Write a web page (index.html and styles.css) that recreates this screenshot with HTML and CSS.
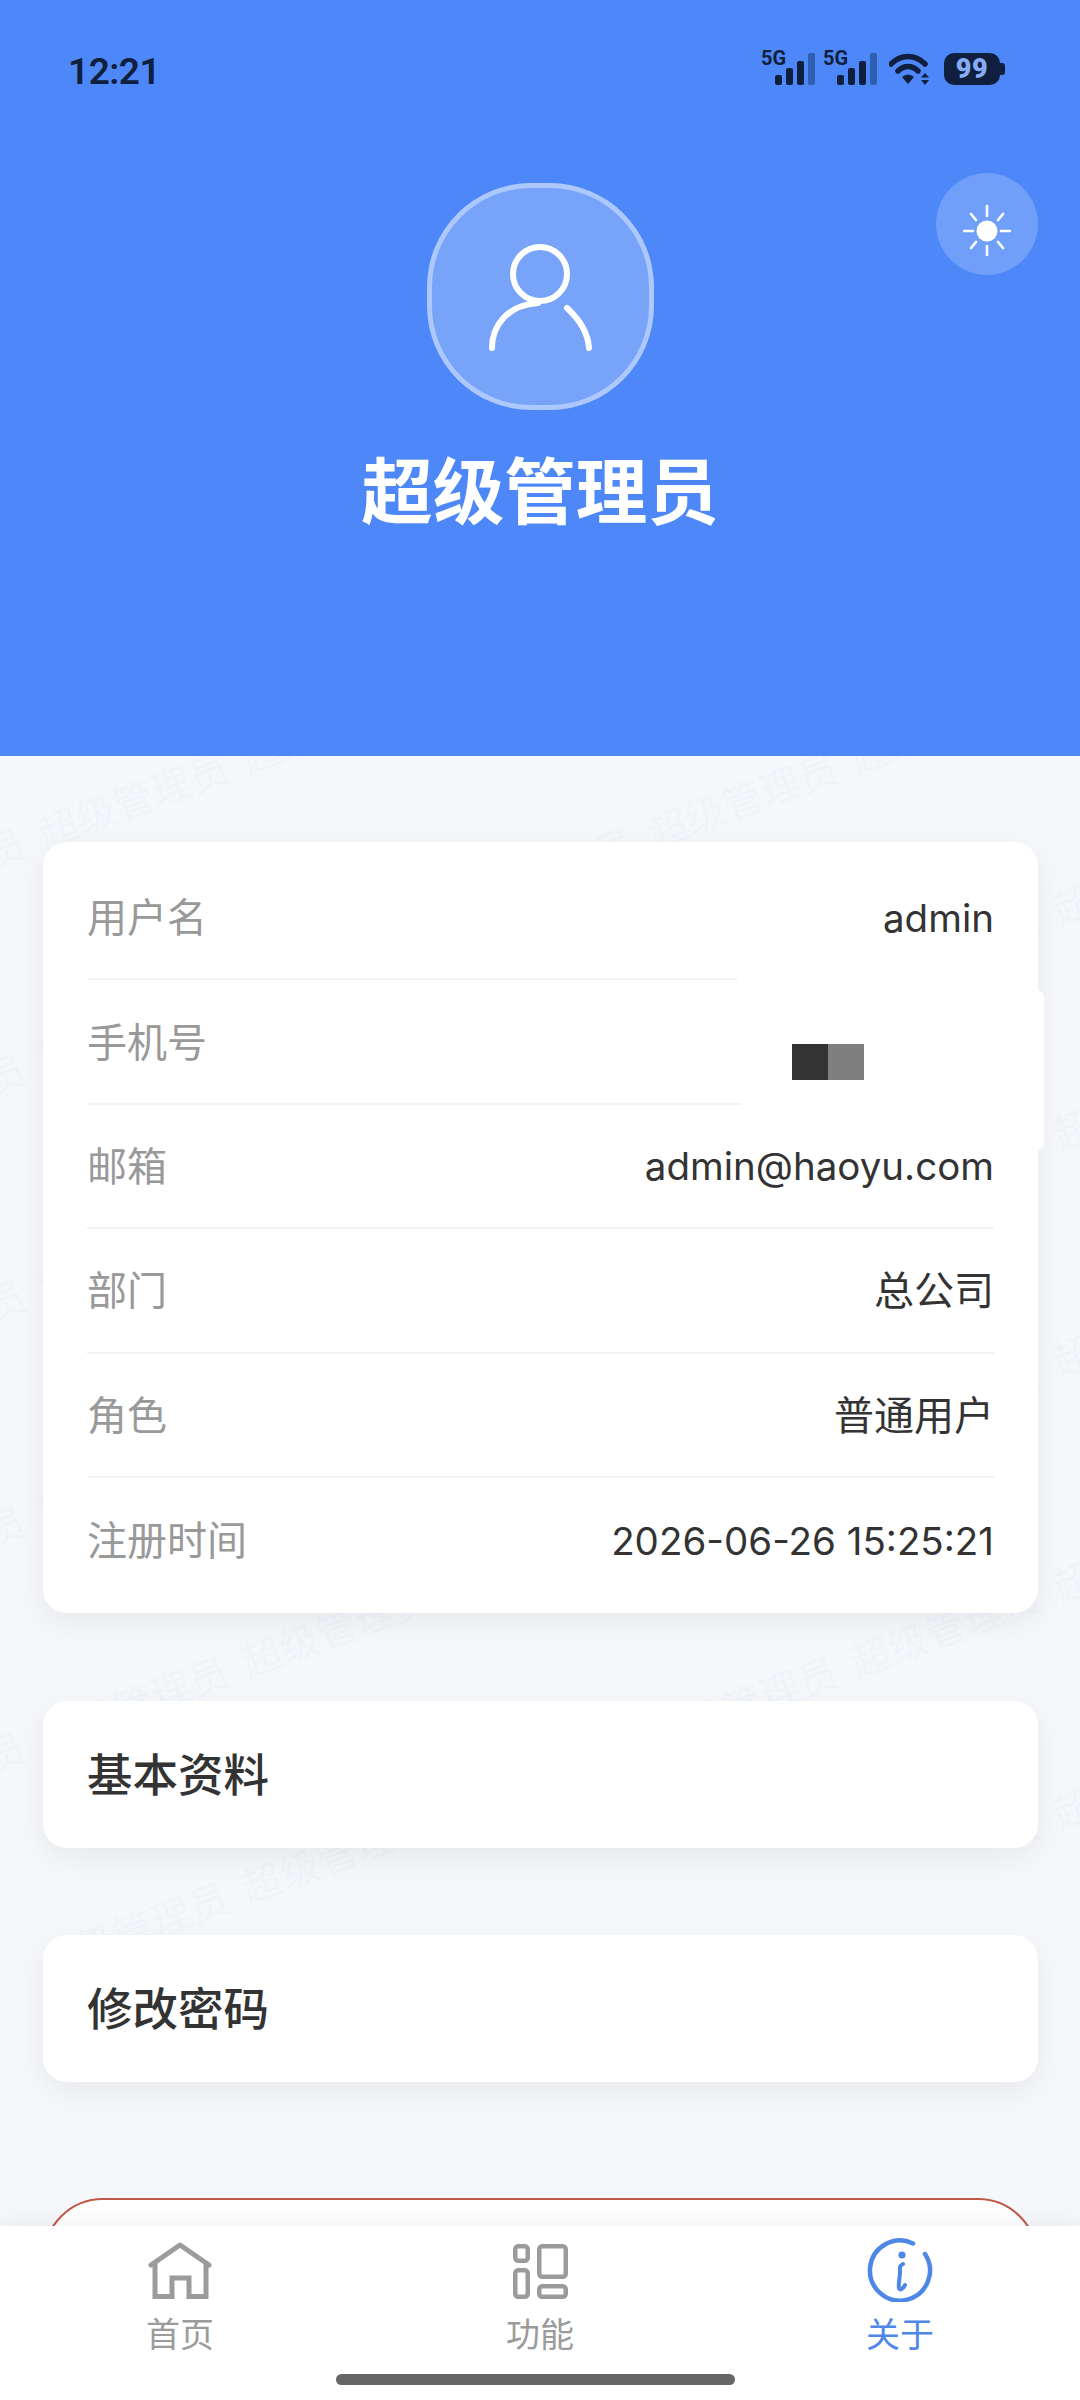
FILE: index.html
```html
<!DOCTYPE html>
<html lang="zh-CN">
<head>
  <meta charset="UTF-8">
  <meta name="viewport" content="width=device-width, initial-scale=1.0">
  <title>关于</title>
  <link rel="stylesheet" href="styles.css">
</head>
<body>
<div class="page">
  <header class="profile-header">
    <div class="status-bar">
      <span class="status-time">12:21</span>
      <div class="status-icons">
        <div class="signal">
          <span class="signal-label">5G</span>
          <i class="bar bar-1"></i><i class="bar bar-2"></i><i class="bar bar-3"></i><i class="bar bar-4"></i>
        </div>
        <div class="signal">
          <span class="signal-label">5G</span>
          <i class="bar bar-1"></i><i class="bar bar-2"></i><i class="bar bar-3"></i><i class="bar bar-4"></i>
        </div>
        <svg class="wifi" width="44" height="32" viewBox="0 0 44 32">
          <path d="M2 11 C12 1 26 1 36 11" fill="none" stroke="#0f1f3d" stroke-width="5.5" stroke-linecap="round"/>
          <path d="M9 18 C15 12 23 12 29 18" fill="none" stroke="#0f1f3d" stroke-width="5.5" stroke-linecap="round"/>
          <path d="M13 24 Q19 19 25 24 L19 31 Z" fill="#0f1f3d"/>
          <path d="M36 20 L40 24.5 H32 Z M36 32 L40 27 H32 Z" fill="#0f1f3d"/>
        </svg>
        <div class="battery"><span class="battery-level">99</span></div>
      </div>
    </div>

    <button class="theme-toggle">
      <svg class="sun" width="48" height="52" viewBox="0 0 48 52">
        <circle cx="24" cy="27" r="10.5" fill="#fff"/>
        <g stroke="#fff" stroke-width="2.6" stroke-linecap="round">
          <path d="M24 2 V12"/>
          <path d="M24 42 V51"/>
          <path d="M1 27 H10"/>
          <path d="M38 27 H47"/>
          <path d="M8 10 L13 16"/>
          <path d="M40 10 L35 16"/>
          <path d="M8 44 L13 38"/>
          <path d="M40 44 L35 38"/>
        </g>
      </svg>
    </button>

    <div class="avatar">
      <svg width="120" height="120" viewBox="0 0 120 120">
        <circle cx="60" cy="37" r="27" fill="none" stroke="#fff" stroke-width="6"/>
        <path d="M12 111 C12 88 28 68 58 66" fill="none" stroke="#fff" stroke-width="6" stroke-linecap="round"/>
        <path d="M87 71 C100 83 108 95 109 111" fill="none" stroke="#fff" stroke-width="6" stroke-linecap="round"/>
      </svg>
    </div>
    <h1 class="profile-name">超级管理员</h1>
  </header>

  <main class="content">
    <svg class="watermark" width="1080" height="1644">
      <defs>
        <pattern id="wm" patternUnits="userSpaceOnUse" x="35" y="129" width="609" height="226">
          <text class="wm-text" x="10" y="190" transform="rotate(-20.3 10 190)">超级管理员</text>
          <text class="wm-text" x="213" y="115" transform="rotate(-20.3 213 115)">超级管理员</text>
          <text class="wm-text" x="416" y="40" transform="rotate(-20.3 416 40)">超级管理员</text>
          <text class="wm-text" x="416" y="266" transform="rotate(-20.3 416 266)">超级管理员</text>
        </pattern>
      </defs>
      <rect width="1080" height="1092" fill="url(#wm)"/>
      <rect y="1092" width="540" height="87" fill="url(#wm)"/>
    </svg>

    <section class="card info-card">
      <div class="info-row"><span class="info-label">用户名</span><span class="info-value">admin</span></div>
      <div class="info-row"><span class="info-label">手机号</span></div>
      <div class="info-row"><span class="info-label">邮箱</span><span class="info-value">admin@haoyu.com</span></div>
      <div class="info-row"><span class="info-label">部门</span><span class="info-value info-value-cjk">总公司</span></div>
      <div class="info-row"><span class="info-label">角色</span><span class="info-value info-value-cjk">普通用户</span></div>
      <div class="info-row info-row-last"><span class="info-label">注册时间</span><span class="info-value">2026-06-26 15:25:21</span></div>
      <div class="redact"><i class="mosaic-dark"></i><i class="mosaic-light"></i></div>
    </section>

    <section class="card menu-card">基本资料</section>
    <section class="card menu-card menu-card-second">修改密码</section>
    <section class="logout-card"></section>
  </main>

  <nav class="tabbar">
    <div class="tab">
      <svg width="70" height="64" viewBox="0 0 70 64">
        <path d="M6 27 L35 7 L64 27" fill="none" stroke="#9b9b9b" stroke-width="5" stroke-linecap="round" stroke-linejoin="round"/>
        <path d="M10 25 V58.5 H27 V40 H44 V58.5 H61 V25" fill="none" stroke="#9b9b9b" stroke-width="5"/>
      </svg>
      <span class="tab-label">首页</span>
    </div>
    <div class="tab">
      <svg width="70" height="64" viewBox="0 0 70 64">
        <g fill="none" stroke="#9b9b9b" stroke-width="4.5">
          <rect x="10.25" y="8.25" width="12.5" height="14.5" rx="3"/>
          <rect x="10.25" y="32.25" width="12.5" height="26.5" rx="3"/>
          <rect x="34.25" y="8.25" width="26.5" height="30.5" rx="3"/>
          <rect x="34.25" y="48.25" width="26.5" height="10.5" rx="3"/>
        </g>
      </svg>
      <span class="tab-label">功能</span>
    </div>
    <div class="tab tab-active">
      <svg width="70" height="64" viewBox="0 0 70 64">
        <path d="M48 5.5 A30 30 0 1 0 60 16" fill="none" stroke="#4f87e8" stroke-width="4.5" stroke-linecap="round"/>
        <circle cx="37" cy="17" r="3.6" fill="#4f87e8"/>
        <path d="M38 26 C34 28 35 30 35 34 C35 40 33 46 34 50 C35 53 38 51 40 47" fill="none" stroke="#4f87e8" stroke-width="4" stroke-linecap="round"/>
      </svg>
      <span class="tab-label">关于</span>
    </div>
    <div class="home-indicator"></div>
  </nav>
</div>
</body>
</html>
```

FILE: styles.css
```css
* {
  box-sizing: border-box;
}

body {
  margin: 0;
  font-family: Inter, "Noto Sans CJK SC", sans-serif;
  background-color: #f5f7fb;
}

.page {
  position: relative;
  width: 1080px;
  height: 2400px;
  overflow: hidden;
  background-color: #f5f7fb;
}

/* header */
.profile-header {
  position: relative;
  z-index: 1;
  height: 756px;
  display: flex;
  flex-direction: column;
  align-items: center;
  background-color: #4d87f8;
}

.status-bar {
  width: 100%;
  height: 183px;
  padding: 50px 80px 0 68px;
  display: flex;
  justify-content: space-between;
  align-items: flex-start;
}

.status-time {
  font-family: Roboto, sans-serif;
  font-size: 37px;
  line-height: 44px;
  font-weight: 600;
  letter-spacing: -0.5px;
  color: #0f1f3d;
}

.status-icons {
  display: flex;
  align-items: flex-start;
  margin-top: 3px;
}

.signal {
  position: relative;
  width: 62px;
  height: 32px;
}

.signal-label {
  position: absolute;
  left: 0;
  top: -6px;
  font-family: Roboto, sans-serif;
  font-size: 20px;
  line-height: 22px;
  font-weight: 700;
  color: #0f1f3d;
}

.bar {
  position: absolute;
  bottom: 0;
  width: 7px;
  border-radius: 2px;
  background-color: #0f1f3d;
}

.bar-1 { left: 14px; height: 10px; }
.bar-2 { left: 25px; height: 17px; }
.bar-3 { left: 36px; height: 24px; }
.bar-4 { left: 47px; height: 32px; background-color: #2f5fb0; }

.wifi {
  margin-left: 4px;
}

.battery {
  position: relative;
  width: 56px;
  height: 32px;
  margin-left: 11px;
  border-radius: 10px;
  background-color: #0f1f3d;
  text-align: center;
}

.battery::after {
  content: "";
  position: absolute;
  right: -5px;
  top: 10px;
  width: 5px;
  height: 12px;
  border-radius: 0 3px 3px 0;
  background-color: #0f1f3d;
}

.battery-level {
  font-family: Roboto, sans-serif;
  font-size: 27px;
  line-height: 32px;
  font-weight: 900;
  letter-spacing: 0.5px;
  color: #86acf7;
}

.theme-toggle {
  position: absolute;
  left: 936px;
  top: 173px;
  width: 102px;
  height: 102px;
  padding: 0;
  border: none;
  border-radius: 50%;
  display: flex;
  justify-content: center;
  align-items: center;
  background-color: rgba(255, 255, 255, 0.2);
}

.sun {
  margin-top: 12px;
}

.avatar {
  width: 227px;
  height: 227px;
  display: flex;
  justify-content: center;
  align-items: center;
  border: 5px solid rgba(255, 255, 255, 0.4);
  border-radius: 104px;
  background-color: rgba(255, 255, 255, 0.24);
}

.profile-name {
  margin: 25px 0 0;
  font-family: "Noto Sans CJK SC", sans-serif;
  font-size: 71.5px;
  line-height: 104px;
  font-weight: 600;
  color: #fff;
}

/* content */
.content {
  position: relative;
  padding: 86px 42px 0 43px;
}

.watermark {
  position: absolute;
  left: 0;
  top: 0;
}

.wm-text {
  font-family: "Noto Sans CJK SC", sans-serif;
  font-size: 40px;
  fill: #f0f3f8;
}

.card {
  position: relative;
  border-radius: 24px;
  background-color: #fff;
  box-shadow: 0 10px 30px rgba(0, 0, 0, 0.06);
}

.info-card {
  height: 771px;
  padding: 14px 44px 0;
}

.info-row {
  height: 124.4px;
  padding-bottom: 4px;
  display: flex;
  justify-content: space-between;
  align-items: center;
  border-bottom: 2px solid #f2f3f5;
}

.info-row-last {
  border-bottom: none;
}

.info-label {
  font-family: "Noto Sans CJK SC", sans-serif;
  font-size: 40px;
  color: #999;
}

.info-value {
  margin-top: 5px;
  font-size: 38.5px;
  color: #333;
}

.info-value-cjk {
  margin-top: 0;
  font-family: "Noto Sans CJK SC", sans-serif;
  font-size: 40px;
}

/* white block hiding the phone number */
.redact {
  position: absolute;
  left: 694px;
  top: 128px;
  width: 307px;
  height: 180px;
  padding: 74px 0 0 55px;
  display: flex;
  align-items: flex-start;
  background-color: #fff;
  clip-path: polygon(0 0, 301px 0, 301px 20px, 307px 24px, 307px 176px, 301px 180px, 6px 180px);
}

.mosaic-dark,
.mosaic-light {
  width: 36px;
  height: 36px;
}

.mosaic-dark { background-color: #333; }
.mosaic-light { background-color: #7f7f7f; }

.menu-card {
  height: 147px;
  margin-top: 88px;
  padding: 0 44px 5px;
  display: flex;
  align-items: center;
  font-family: "Noto Sans CJK SC", sans-serif;
  font-size: 45.5px;
  font-weight: 500;
  color: #333;
}

.menu-card-second {
  margin-top: 87px;
}

.logout-card {
  position: relative;
  height: 147px;
  margin-top: 116px;
  border: 2px solid #c0584a;
  border-radius: 60px;
  background-color: #fff;
}

/* bottom tabs */
.tabbar {
  position: absolute;
  left: 0;
  bottom: 0;
  z-index: 2;
  width: 100%;
  height: 174px;
  padding-top: 12px;
  display: flex;
  background-color: #fff;
  box-shadow: 0 -4px 20px rgba(0, 0, 0, 0.05);
}

.tab {
  flex: 1;
  display: flex;
  flex-direction: column;
  align-items: center;
}

.tab-label {
  font-family: "Noto Sans CJK SC", sans-serif;
  font-size: 34px;
  line-height: 48px;
  margin-top: 7px;
  color: #9b9b9b;
}

.tab-active .tab-label {
  color: #4f87e8;
}

.home-indicator {
  position: absolute;
  left: 336px;
  top: 148px;
  width: 399px;
  height: 11px;
  border-radius: 6px;
  background-color: #666;
}
```
